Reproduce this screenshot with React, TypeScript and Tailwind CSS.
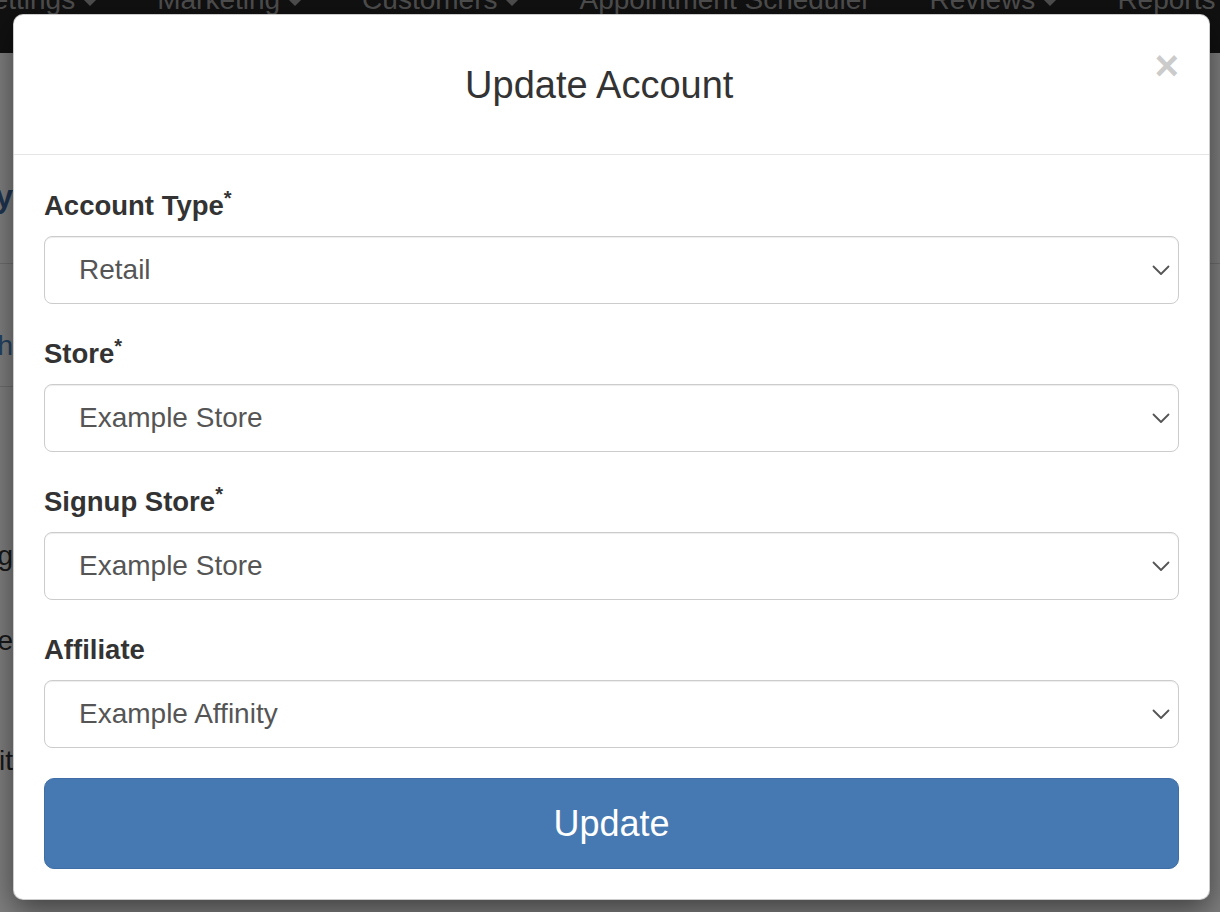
import React from 'react';

const navItems = [
  { label: 'Settings', caret: true },
  { label: 'Marketing', caret: true },
  { label: 'Customers', caret: true },
  { label: 'Appointment Scheduler', caret: false },
  { label: 'Reviews', caret: true },
  { label: 'Reports', caret: false },
];

const fields = [
  { label: 'Account Type', value: 'Retail', required: true },
  { label: 'Store', value: 'Example Store', required: true },
  { label: 'Signup Store', value: 'Example Store', required: true },
  { label: 'Affiliate', value: 'Example Affinity', required: false },
];

const Caret = () => (
  <span className="ml-[7px] inline-block h-0 w-0 border-x-[8px] border-t-[8px] border-x-transparent border-t-[#9d9d9d] align-middle" />
);

const Chevron = () => (
  <svg width="18" height="11" viewBox="0 0 18 11" fill="none" className="shrink-0">
    <path d="M1.5 1.5L9 9L16.5 1.5" stroke="#555" strokeWidth="1.8" strokeLinecap="round" strokeLinejoin="round" />
  </svg>
);

// text of the page underneath that peeks out beside the dialog
const Peek = ({ children, className }: { children: React.ReactNode; className: string }) => (
  <div className="flex w-[13px] justify-end overflow-hidden">
    <span className={`whitespace-nowrap ${className}`}>{children}</span>
  </div>
);

const SelectField = ({ label, value, required }: { label: string; value: string; required: boolean }) => (
  <div className="mb-[30px]">
    <label className="mb-[10px] block text-[27.5px] font-bold leading-[40px] text-[#333]">
      {label}
      {required && <sup className="text-[20px]">*</sup>}
    </label>
    <div className="flex h-[68px] items-center justify-between rounded-[8px] border border-[#ccc] bg-white pl-[34px] pr-[8px] shadow-[inset_0_1px_1px_rgba(0,0,0,0.075)]">
      <span className="text-[28px] text-[#555]">{value}</span>
      <Chevron />
    </div>
  </div>
);

export default function App() {
  return (
    <div className="relative h-[912px] overflow-hidden bg-white font-['Liberation_Sans',Arial,sans-serif]">
      <nav className="h-[53px] overflow-hidden bg-[#222]">
        <ul className="-ml-[26px] -mt-[20px] flex gap-[59px] whitespace-nowrap text-[28px] leading-[40px] text-[#9d9d9d]">
          {navItems.map((item) => (
            <li key={item.label}>
              {item.label}
              {item.caret && <Caret />}
            </li>
          ))}
        </ul>
      </nav>

      <div className="h-[211px] border-b border-[#ddd] pt-[126px]">
        <Peek className="text-[32px] font-bold leading-[35px] text-[#3f6ba1]">Customer Loyalty</Peek>
      </div>
      <div className="h-[123px] w-[40%] border-b border-[#ddd] pt-[62px]">
        <Peek className="text-[28px] leading-[40px] text-[#4d84c4]">Search</Peek>
      </div>
      <div className="pt-[149px] text-[28px] leading-[40px] text-[#333]">
        <Peek className="">Signing</Peek>
        <div className="pt-[45px]">
          <Peek className="">Store</Peek>
        </div>
        <div className="pt-[80px]">
          <Peek className="">Limit</Peek>
        </div>
      </div>

      <div className="absolute inset-0 bg-black/50" />

      <div className="absolute left-[13px] top-[14px] w-[1197px] rounded-[10px] border border-black/20 bg-white shadow-[0_10px_30px_rgba(0,0,0,0.5)]">
        <div className="flex h-[140px] items-center border-b border-[#e5e5e5] px-[30px]">
          <h4 className="flex-1 text-center text-[38px] leading-[54px] text-[#333]">Update Account</h4>
          <button className="mt-[30px] self-start text-[42px] font-bold leading-none text-black opacity-20">
            ×
          </button>
        </div>

        <div className="px-[30px] pb-[30px] pt-[31px]">
          {fields.map((f) => (
            <SelectField key={f.label} label={f.label} value={f.value} required={f.required} />
          ))}
          <button className="h-[91px] w-full rounded-[10px] border border-[#3f6ea6] bg-[#4679b2] text-[36px] leading-[48px] text-white">
            Update
          </button>
        </div>
      </div>
    </div>
  );
}
